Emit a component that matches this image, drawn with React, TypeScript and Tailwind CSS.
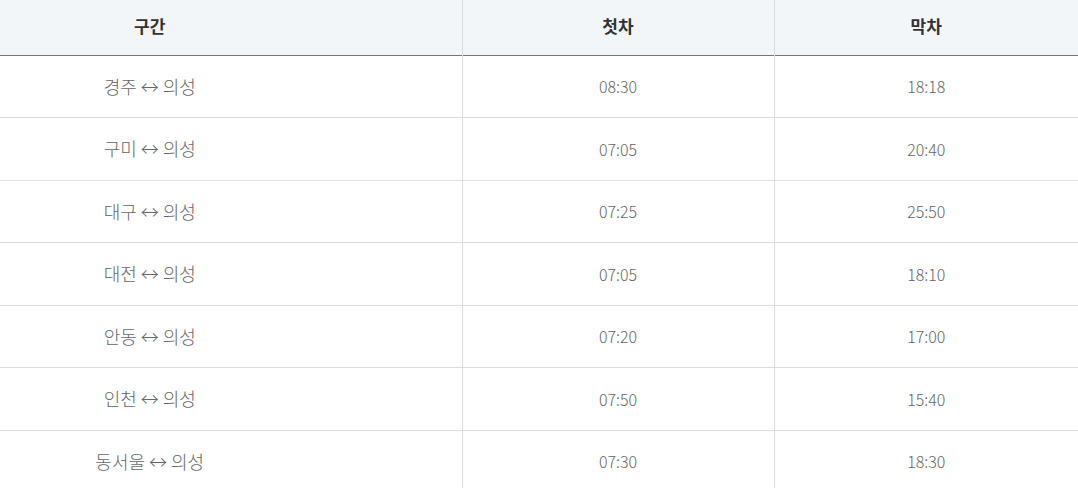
const rows = [
  { route: '경주 ↔ 의성', first: '08:30', last: '18:18' },
  { route: '구미 ↔ 의성', first: '07:05', last: '20:40' },
  { route: '대구 ↔ 의성', first: '07:25', last: '25:50' },
  { route: '대전 ↔ 의성', first: '07:05', last: '18:10' },
  { route: '안동 ↔ 의성', first: '07:20', last: '17:00' },
  { route: '인천 ↔ 의성', first: '07:50', last: '15:40' },
  { route: '동서울 ↔ 의성', first: '07:30', last: '18:30' },
];

export default function App() {
  return (
    <div className="w-[1078px] h-[488px] overflow-hidden bg-white font-['Noto_Sans_CJK_KR','Noto_Sans',sans-serif]">
      <table className="w-full border-collapse table-fixed">
        <colgroup>
          <col className="w-[462px]" />
          <col className="w-[312px]" />
          <col />
        </colgroup>
        <thead>
          <tr className="h-[55px] bg-[#f3f6f9] border-b border-[#777]">
            <th className="pr-[162px] pb-[4px] text-[17px] font-bold text-[#333] text-center">구간</th>
            <th className="border-l border-[#ddd] pb-[4px] text-[17px] font-bold text-[#333] text-center">첫차</th>
            <th className="border-l border-[#ddd] pb-[4px] text-[17px] font-bold text-[#333] text-center">막차</th>
          </tr>
        </thead>
        <tbody>
          {rows.map((row) => (
            <tr key={row.route} className="h-[62.5px] border-b border-[#ddd]">
              <td className="pr-[162px] text-[18px] font-light text-[#666] text-center">{row.route}</td>
              <td className="border-l border-[#ddd] text-[16px] font-light text-[#666] text-center">{row.first}</td>
              <td className="border-l border-[#ddd] text-[16px] font-light text-[#666] text-center">{row.last}</td>
            </tr>
          ))}
        </tbody>
      </table>
    </div>
  );
}
